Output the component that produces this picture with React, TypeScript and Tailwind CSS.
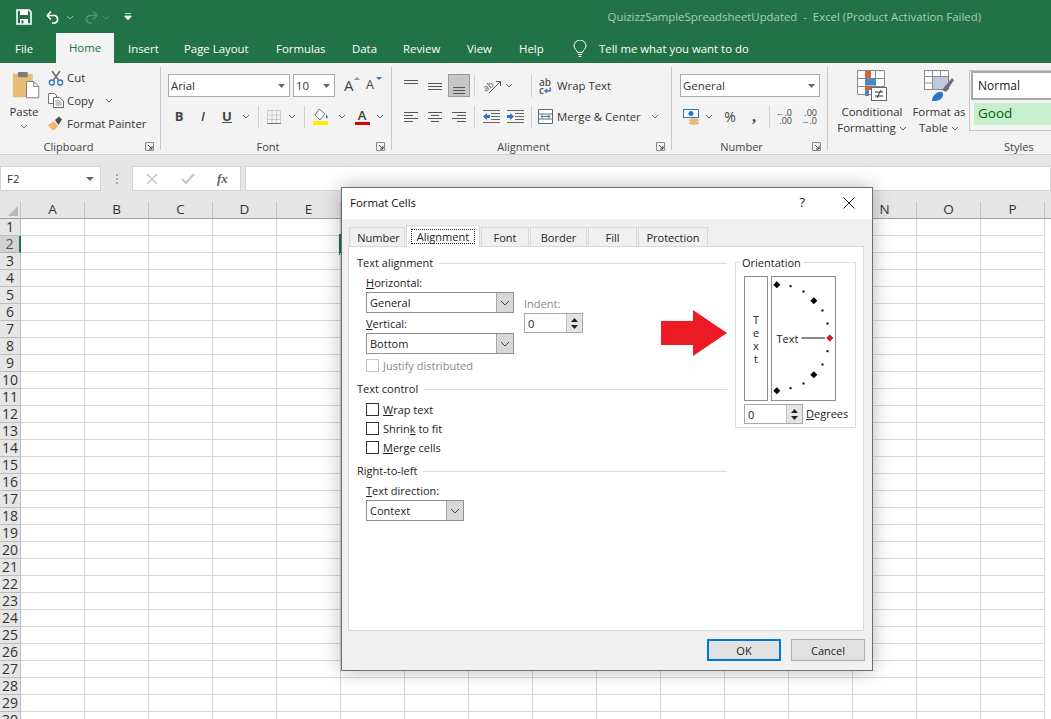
import React from 'react';

const GREEN = '#217346';

function Chev({ className = '', color = '#666' }: { className?: string; color?: string }) {
  return (
    <svg width="8" height="5" viewBox="0 0 8 5" className={`shrink-0 ${className}`}>
      <path d="M1 1l3 3 3-3" fill="none" stroke={color} strokeWidth="1" />
    </svg>
  );
}

function Launcher() {
  return (
    <svg width="9" height="9" viewBox="0 0 9 9" className="mt-[1px]">
      <path d="M.5 8.500v-8h8v8z" fill="none" stroke="#8a8a8a" />
      <path d="M3 3l4 4M7 4v3H4" fill="none" stroke="#444" />
    </svg>
  );
}

function Group({ className, label, labelClass = '', children }: { className: string; label: string; labelClass?: string; children: React.ReactNode }) {
  return (
    <div className={`relative flex flex-col shrink-0 ${className}`}>
      <div className="h-[77px]">{children}</div>
      <div className="flex items-center h-[16px] mt-[-1px]">
        <div className={`flex-1 text-center text-[11px] text-[#444] leading-none pr-[1px] ${labelClass}`}>{label}</div>
        <div className="w-[16px] shrink-0"><Launcher /></div>
      </div>
      <div className="absolute right-0 top-[4px] bottom-[4px] w-px bg-[#c8c8c8]" />
    </div>
  );
}

function Sep({ className = '' }: { className?: string }) {
  return <div className={`w-px h-[22px] bg-[#d0d0d0] shrink-0 ${className}`} />;
}

function Lines({ rows, x1, x2 }: { rows: number[]; x1: number[]; x2: number[] }) {
  return (
    <svg width="16" height="16" viewBox="0 0 16 16">
      {rows.map((y, i) => (
        <path key={y} d={`M${x1[i]} ${y + 0.5}H${x2[i]}`} stroke="#555" />
      ))}
    </svg>
  );
}

function AlignCell({ active, children }: { active?: boolean; children: React.ReactNode }) {
  return (
    <div className={`w-[22px] h-[23px] flex items-center justify-center shrink-0 ${active ? 'bg-[#c6c6c6] border border-[#9a9a9a]' : ''}`}>
      {children}
    </div>
  );
}

function PasteIcon() {
  return (
    <svg width="28" height="29" viewBox="0 0 30 32" className="ml-[3px]">
      <rect x="0.500" y="3" width="22" height="26" fill="#e8bd78" />
      <rect x="6" y="1" width="11" height="6" rx="1" fill="#7b7b7b" />
      <path d="M15.500 11.500h8l5.500 5.500v12.500h-13.500z" fill="#fff" stroke="#777" />
      <path d="M23.500 11.500v5.500h5.500" fill="none" stroke="#777" />
    </svg>
  );
}

function Scissors() {
  return (
    <svg width="16" height="16" viewBox="0 0 16 16">
      <path d="M4 1l6.500 9M12 1L5.500 10" stroke="#6d6d6d" strokeWidth="1.500" fill="none" />
      <circle cx="3.800" cy="12.500" r="2.500" fill="none" stroke="#2f74c0" strokeWidth="1.300" />
      <circle cx="12.200" cy="12.500" r="2.500" fill="none" stroke="#2f74c0" strokeWidth="1.300" />
    </svg>
  );
}

function CopyIcon() {
  return (
    <svg width="16" height="15" viewBox="0 0 16 15">
      <path d="M.5.500h6l2 2v8h-8z" fill="#fff" stroke="#777" />
      <path d="M5.500 4.500h6l4 3.500v6.500h-10z" fill="#fff" stroke="#666" />
      <path d="M7.500 8h5M7.500 10h6M7.500 12h6" stroke="#888" />
    </svg>
  );
}

function Brush() {
  return (
    <svg width="16" height="15" viewBox="0 0 16 15">
      <path d="M0 9l6-4 4 5-4 4.500C4 14 1.500 11 0 9z" fill="#eeb76c" />
      <path d="M7 4l4-3.500 3 3L10.500 9z" fill="#4d4d4d" />
    </svg>
  );
}

function Tab({ children, className = '' }: { children: React.ReactNode; className?: string }) {
  return <div className={`text-[11.4px] leading-none text-white shrink-0 whitespace-nowrap ${className}`}>{children}</div>;
}

function Select({ value, className }: { value: string; className: string }) {
  return (
    <div className={`flex items-center h-[21px] border border-[#8f8f8f] bg-white ${className}`}>
      <span className="flex-1 pl-[3px] text-[11px] text-[#222] leading-none">{value}</span>
      <span className="w-[17px] h-full bg-[#d8d8d8] border-l border-[#a8a8a8] flex items-center justify-center">
        <svg width="10" height="6" viewBox="0 0 10 6"><path d="M1 1l4 4 4-4" fill="none" stroke="#444" /></svg>
      </span>
    </div>
  );
}

function Spinner({ className }: { className: string }) {
  return (
    <div className={`flex items-center border border-[#a8a8a8] bg-white ${className}`}>
      <span className="flex-1 pl-[3px] text-[11px] text-[#222] leading-none">0</span>
      <span className="w-[16px] h-full bg-[#e4e4e4] border-l border-[#c0c0c0] flex flex-col items-center justify-center gap-[3px]">
        <svg width="7" height="4" viewBox="0 0 7 4"><path d="M3.500 0L7 4H0z" fill="#222" /></svg>
        <svg width="7" height="4" viewBox="0 0 7 4"><path d="M3.500 4L0 0h7z" fill="#222" /></svg>
      </span>
    </div>
  );
}

function Legend({ children, className = '' }: { children: React.ReactNode; className?: string }) {
  return (
    <div className={`flex items-center h-[16px] gap-[6px] ${className}`}>
      <span className="text-[11px] text-[#222] leading-none mt-[-2px]">{children}</span>
      <div className="flex-1 h-px bg-[#dcdcdc]" />
    </div>
  );
}

function Check({ children, className = '', disabled }: { children: React.ReactNode; className?: string; disabled?: boolean }) {
  return (
    <div className={`flex items-center h-[14px] ${className}`}>
      <div className={`w-[13px] h-[13px] mt-[-1px] border bg-white shrink-0 ${disabled ? 'border-[#c8c8c8]' : 'border-[#333]'}`} />
      <span className={`ml-[4px] mt-[-2px] text-[11px] leading-none ${disabled ? 'text-[#8a8a8a]' : 'text-[#222]'}`}>{children}</span>
    </div>
  );
}

function DTab({ children, className = '' }: { children: React.ReactNode; className?: string }) {
  return (
    <div className={`h-[19px] mt-[1px] flex items-center justify-center border border-b-0 border-[#d9d9d9] bg-[#f0f0f0] text-[11px] text-[#222] leading-none shrink-0 ml-[1px] ${className}`}>
      {children}
    </div>
  );
}

function Dial() {
  const big = [[5.8, 8.8], [42.8, 24.8], [42.8, 98.8], [5.8, 114.8]];
  const small = [[19.5, 10.2], [32.5, 15.5], [51.5, 34.5], [56.5, 47.5], [56.5, 75.2], [51.5, 88.5], [32.5, 107.5], [19.5, 112.2]];
  return (
    <div className="w-[65px] h-[125px] border border-[#8c8c8c] ml-[3px] shrink-0">
      <svg width="63" height="123" viewBox="1 1 63 123">
        {big.map(([x, y]) => (
          <path key={`${x}-${y}`} d={`M${x} ${y - 3.5}l3.500 3.500-3.500 3.500-3.500-3.500z`} fill="#000" />
        ))}
        {small.map(([x, y]) => (
          <rect key={`${x}-${y}`} x={x - 1} y={y - 1} width="2" height="2" fill="#000" />
        ))}
        <text x="5.500" y="67" fontSize="11" fill="#222">Text</text>
        <path d="M30.500 62H54" stroke="#111" />
        <path d="M58.800 58.800l3.200 3.200-3.200 3.200-3.200-3.200z" fill="#e01b24" stroke="#700" strokeWidth=".5" />
      </svg>
    </div>
  );
}

const columns = ['A', 'B', 'C', 'D', 'E', 'F', 'G', 'H', 'I', 'J', 'K', 'L', 'M', 'N', 'O', 'P'];
const rows = Array.from({ length: 30 }, (_, i) => i + 1);

function Sheet() {
  return (
    <div className="relative flex-1 overflow-hidden bg-white">
      <div className="flex h-[17px] bg-[#e6e6e6] border-b border-[#9f9f9f]">
        <div className="w-[21px] shrink-0 flex items-end justify-end pr-[2px] pb-[2px] border-r border-[#c4c4c4]">
          <svg width="10" height="10" viewBox="0 0 10 10"><path d="M10 0v10H0z" fill="#b8b8b8" /></svg>
        </div>
        {columns.map((c) => (
          <div key={c} className="w-[64px] shrink-0 border-r border-[#c4c4c4] flex items-center justify-center text-[13.5px] text-[#333] leading-none">
            {c}
          </div>
        ))}
      </div>
      {rows.map((r) => (
        <div key={r} className="flex h-[17px]">
          <div className={`w-[21px] shrink-0 border-b border-r flex items-center justify-center text-[14px] leading-none ${r === 2 ? 'bg-[#d2d2d2] border-r-2 border-r-[#217346] border-b-[#b4b4b4] text-[#3f5a4a]' : 'bg-[#e6e6e6] border-[#bdbdbd] text-[#333]'}`}>
            {r}
          </div>
          {columns.map((c) => (
            <div key={c} className={`w-[64px] shrink-0 border-b border-r border-[#d6d6d6] ${r === 2 && c === 'F' ? 'outline-2 outline-[#217346]' : ''}`} />
          ))}
        </div>
      ))}
    </div>
  );
}

function Dialog() {
  return (
    <div className="absolute left-[341px] top-[187px] w-[532px] h-[484px] border border-[#6f6f6f] bg-[#f0f0f0] flex flex-col shadow-[0_0_18px_rgba(0,0,0,0.28)]">
      <div className="h-[31px] shrink-0 bg-white flex items-center pl-[8px] pr-[17px]">
        <span className="flex-1 text-[11.4px] text-[#111] leading-none mt-[-2px]">Format Cells</span>
        <span className="text-[13px] text-[#222] leading-none mr-[38px] mt-[-2px]">?</span>
        <svg width="12" height="12" viewBox="0 0 12 12" className="mt-[-1px]"><path d="M.5.500l11 11M11.500.500l-11 11" stroke="#222" /></svg>
      </div>
      <div className="h-[20px] mt-[7px] ml-[6px] flex items-end relative z-10 shrink-0">
        <DTab className="w-[56px] ml-0 pl-[3px]">Number</DTab>
        <div className="w-[74px] h-[22px] ml-[1px] mb-[-1px] bg-white border border-b-0 border-[#d9d9d9] flex items-center justify-center shrink-0">
          <span className="w-[64px] h-[15px] border border-dotted border-[#222] flex items-center justify-center text-[11px] text-[#222] leading-none">Alignment</span>
        </div>
        <DTab className="w-[48px]">Font</DTab>
        <DTab className="w-[57px]">Border</DTab>
        <DTab className="w-[49px]">Fill</DTab>
        <DTab className="w-[70px]">Protection</DTab>
      </div>
      <div className="ml-[6px] mr-[8px] h-[385px] shrink-0 bg-white border border-[#d9d9d9] flex">
        <div className="w-[378px] pl-[8px] shrink-0">
          <Legend className="mt-[8px]">Text alignment</Legend>
          <div className="flex pl-[9px] mt-[4px]">
            <div className="w-[148px]">
              <div className="h-[16px] text-[11px] text-[#222] leading-[16px]"><u>H</u>orizontal:</div>
              <Select value="General" className="w-[148px] mt-[1px]" />
              <div className="h-[16px] mt-[3px] text-[11px] text-[#222] leading-[16px]"><u>V</u>ertical:</div>
              <Select value="Bottom" className="w-[148px] mt-[1px]" />
            </div>
            <div className="ml-[10px] pt-[21px]">
              <div className="h-[16px] text-[11px] text-[#8a8a8a] leading-[16px]">Indent:</div>
              <Spinner className="w-[59px] h-[20px] mt-[1px]" />
            </div>
          </div>
          <Check className="ml-[9px] mt-[5px]" disabled>Justify distributed</Check>
          <Legend className="mt-[8px]">Text control</Legend>
          <Check className="ml-[9px] mt-[6px]"><u>W</u>rap text</Check>
          <Check className="ml-[9px] mt-[5px]">Shrin<u>k</u> to fit</Check>
          <Check className="ml-[9px] mt-[5px]"><u>M</u>erge cells</Check>
          <Legend className="mt-[8px]">Right-to-left</Legend>
          <div className="h-[16px] ml-[9px] mt-[4px] text-[11px] text-[#222] leading-[16px]"><u>T</u>ext direction:</div>
          <Select value="Context" className="w-[98px] ml-[9px] mt-[1px]" />
        </div>
        <div className="w-[121px] h-[166px] mt-[15px] ml-[8px] border border-[#dcdcdc] relative pt-[13px] pl-[8px] shrink-0">
          <span className="absolute -top-[8px] left-[4px] bg-white px-[2px] text-[11px] text-[#222] leading-[15px]">Orientation</span>
          <div className="flex">
            <div className="w-[24px] h-[125px] border border-[#8c8c8c] flex flex-col items-center justify-center text-[11px] leading-[13px] text-[#222] shrink-0">
              <span>T</span><span>e</span><span>x</span><span>t</span>
            </div>
            <Dial />
          </div>
          <div className="flex items-center mt-[3px]">
            <Spinner className="w-[59px] h-[20px]" />
            <span className="ml-[3px] mt-[-2px] text-[11px] text-[#222] leading-none"><u>D</u>egrees</span>
          </div>
        </div>
      </div>
      <div className="flex justify-end pr-[7px] mt-[8px] gap-[10px]">
        <div className="w-[74px] h-[22px] border-2 border-[#0078d7] bg-[#e1e1e1] flex items-center justify-center text-[11px] text-[#222] leading-none">OK</div>
        <div className="w-[74px] h-[22px] border border-[#adadad] bg-[#e1e1e1] flex items-center justify-center text-[11px] text-[#222] leading-none">Cancel</div>
      </div>
    </div>
  );
}

function Ribbon() {
  return (
    <div className="h-[92px] shrink-0 bg-[#f3f3f3] border-b border-[#cfcfcf] flex overflow-hidden">
      <Group className="w-[161px]" label="Clipboard" labelClass="pr-[8px]">
        <div className="flex">
          <div className="w-[48px] shrink-0 flex flex-col items-center pt-[8px]">
            <PasteIcon />
            <span className="text-[11.4px] text-[#333] leading-none mt-[6px]">Paste</span>
            <Chev className="mt-[7px]" />
          </div>
          <div className="flex flex-col text-[11.4px] text-[#333] leading-none pt-[3px]">
            <div className="flex items-center h-[23px]"><Scissors /><span className="ml-[3px]">Cut</span></div>
            <div className="flex items-center h-[23px]"><CopyIcon /><span className="ml-[3px]">Copy</span><Chev className="ml-[11px]" /></div>
            <div className="flex items-center h-[23px]"><Brush /><span className="ml-[3px]">Format Painter</span></div>
          </div>
        </div>
      </Group>
      <Group className="w-[231px]" label="Font">
        <div className="flex items-center h-[23px] mt-[11px] pl-[7px]">
          <div className="w-[122px] h-[23px] border border-[#ababab] bg-white flex items-center pl-[2px] pr-[4px] shrink-0">
            <span className="flex-1 text-[11.4px] text-[#333] leading-none">Arial</span>
            <svg width="7" height="4" viewBox="0 0 7 4"><path d="M0 0h7L3.500 4z" fill="#666" /></svg>
          </div>
          <div className="w-[42px] h-[23px] ml-[3px] border border-[#ababab] bg-white flex items-center pl-[2px] pr-[4px] shrink-0">
            <span className="flex-1 text-[11.4px] text-[#333] leading-none">10</span>
            <svg width="7" height="4" viewBox="0 0 7 4"><path d="M0 0h7L3.500 4z" fill="#666" /></svg>
          </div>
          <div className="w-[16px] ml-[9px] text-[15px] text-[#444] leading-none relative shrink-0">A<span className="absolute top-[-1px] right-0 border-x-[3px] border-b-[3px] border-x-transparent border-b-[#8c98a8]" /></div>
          <div className="w-[16px] ml-[6px] text-[12.5px] text-[#444] leading-none relative shrink-0">A<span className="absolute top-[-2px] right-0 border-x-[3px] border-t-[3px] border-x-transparent border-t-[#2f74c0]" /></div>
        </div>
        <div className="flex items-center h-[23px] mt-[8px]">
          <span className="w-[16px] ml-[10px] text-center text-[13px] font-bold text-[#444] leading-none">B</span>
          <span className="w-[16px] ml-[8px] text-center text-[13px] italic font-semibold text-[#444] leading-none">I</span>
          <span className="w-[16px] ml-[8px] text-center text-[13px] font-bold underline text-[#444] leading-none">U</span>
          <Chev className="ml-[7px]" />
          <Sep className="ml-[8px]" />
          <svg width="14" height="14" viewBox="0 0 14 14" className="ml-[8px]">
            <path d="M.5.500h13v13H.500zM.5 5h13M.5 9.500h13M5 .500v13M9.500 .500v13" fill="none" stroke="#a8a8a8" strokeDasharray="1 1" />
            <path d="M0 13.500h14" stroke="#777" />
          </svg>
          <Chev className="ml-[7px]" />
          <Sep className="ml-[8px]" />
          <svg width="16" height="17" viewBox="0 0 16 17" className="ml-[8px]">
            <path d="M6 1l6 5-5 6-5-5z" fill="#fff" stroke="#777" />
            <path d="M13 6l2 3-2 2z" fill="#2f74c0" />
            <rect x="0" y="13" width="15" height="4" fill="#ffeb00" />
          </svg>
          <Chev className="ml-[9px]" />
          <div className="w-[16px] ml-[8px] flex flex-col items-center shrink-0">
            <span className="text-[13px] font-semibold text-[#444] leading-[13px]">A</span>
            <span className="w-[15px] h-[3px] bg-[#e00000]" />
          </div>
          <Chev className="ml-[6px]" />
        </div>
      </Group>
      <Group className="w-[280px]" label="Alignment">
        <div className="flex items-center h-[23px] mt-[11px] pl-[8px] gap-[2px]">
          <AlignCell><Lines rows={[2, 5]} x1={[1, 1]} x2={[15, 15]} /></AlignCell>
          <AlignCell><Lines rows={[5, 8, 11]} x1={[1, 1, 1]} x2={[15, 15, 15]} /></AlignCell>
          <AlignCell active><Lines rows={[9, 12, 15]} x1={[2, 2, 2]} x2={[14, 14, 14]} /></AlignCell>
          <Sep className="ml-[2px]" />
          <svg width="18" height="16" viewBox="0 0 18 16" className="ml-[6px]">
            <text x="0" y="11" fontSize="9" fill="#555" transform="rotate(-35 6 8)">ab</text>
            <path d="M6 15L17 4M13 3.500h4.500V8" fill="none" stroke="#555" />
          </svg>
          <Chev className="ml-[2px]" />
          <Sep className="ml-[16px]" />
          <div className="ml-[5px] w-[14px] text-[10px] text-[#555] leading-[8px] font-semibold shrink-0">ab<br />c<span className="text-[#2f74c0]">↵</span></div>
          <span className="ml-[2px] text-[11.4px] text-[#333] leading-none whitespace-nowrap">Wrap Text</span>
        </div>
        <div className="flex items-center h-[23px] mt-[8px] pl-[8px] gap-[2px]">
          <AlignCell><Lines rows={[3, 6, 9, 12]} x1={[1, 1, 1, 1]} x2={[15, 10, 15, 10]} /></AlignCell>
          <AlignCell><Lines rows={[3, 6, 9, 12]} x1={[1, 4, 1, 4]} x2={[15, 12, 15, 12]} /></AlignCell>
          <AlignCell><Lines rows={[3, 6, 9, 12]} x1={[1, 6, 1, 6]} x2={[15, 15, 15, 15]} /></AlignCell>
          <Sep className="ml-[2px]" />
          <svg width="17" height="13" viewBox="0 0 17 13" className="ml-[6px]">
            <path d="M0 .5h17M8 3.500h9M8 6.500h9M8 9.500h9M0 12.500h17" stroke="#666" />
            <path d="M0 6.500L4 3v2h3v3H4v2z" fill="#2f74c0" />
          </svg>
          <svg width="17" height="13" viewBox="0 0 17 13" className="ml-[5px]">
            <path d="M0 .5h17M8 3.500h9M8 6.500h9M8 9.500h9M0 12.500h17" stroke="#666" />
            <path d="M7 6.500L3 3v2H0v3h3v2z" fill="#2f74c0" />
          </svg>
          <Sep className="ml-[5px]" />
          <svg width="15" height="15" viewBox="0 0 15 15" className="ml-[4px]">
            <path d="M.5.500h14v14H.500zM.5 5h14M.5 10h14" fill="#fff" stroke="#666" />
            <path d="M3 7.500h9M3 7.500l2-2M3 7.500l2 2M12 7.500l-2-2M12 7.500l-2 2" stroke="#2f74c0" fill="none" />
          </svg>
          <span className="ml-[2px] text-[11.4px] text-[#333] leading-none whitespace-nowrap">Merge &amp; Center</span>
          <Chev className="ml-[8px]" />
        </div>
      </Group>
      <Group className="w-[156px]" label="Number">
        <div className="h-[23px] w-[140px] mt-[11px] ml-[8px] border border-[#ababab] bg-white flex items-center pl-[2px] pr-[4px]">
          <span className="flex-1 text-[11.4px] text-[#333] leading-none">General</span>
          <svg width="7" height="4" viewBox="0 0 7 4"><path d="M0 0h7L3.500 4z" fill="#666" /></svg>
        </div>
        <div className="flex items-center h-[23px] mt-[8px]">
          <svg width="17" height="17" viewBox="0 0 17 17" className="ml-[11px]">
            <rect x="0.500" y="1.500" width="15" height="8" fill="#fff" stroke="#2f74c0" />
            <circle cx="8" cy="5.500" r="2.500" fill="#2f74c0" />
            <ellipse cx="11" cy="12" rx="5" ry="1.800" fill="#e8b56c" />
            <ellipse cx="11" cy="15" rx="5" ry="1.800" fill="#e8b56c" />
          </svg>
          <Chev className="ml-[5px]" />
          <span className="w-[16px] ml-[9px] text-center text-[14px] text-[#444] leading-none shrink-0">%</span>
          <span className="w-[10px] ml-[11px] text-center text-[16px] font-bold font-['Liberation_Serif',serif] text-[#444] leading-none shrink-0">,</span>
          <Sep className="ml-[10px]" />
          <div className="w-[18px] ml-[4px] text-[9px] leading-[8px] text-[#444] text-right shrink-0"><span className="text-[#2f74c0]">←</span>.0<br />.00</div>
          <div className="w-[18px] ml-[7px] text-[9px] leading-[8px] text-[#444] text-right shrink-0">.00<br /><span className="text-[#2f74c0]">→</span>.0</div>
        </div>
      </Group>
      <div className="flex flex-col flex-1">
        <div className="flex h-[76px]">
          <div className="w-[90px] ml-[-1px] flex flex-col items-center pt-[7px] shrink-0">
            <svg width="30" height="31" viewBox="0 0 30 31">
              <path d="M.5.500h27v24H.500zM.5 8.500h27M.5 16.500h27M9.500.500v24M18.500.500v24" fill="#fff" stroke="#8a8a8a" />
              <rect x="8" y="1" width="6" height="7" fill="#d9603b" />
              <rect x="8" y="8.500" width="11" height="7" fill="#4a86c8" />
              <rect x="8" y="16" width="8" height="4" fill="#d9603b" />
              <rect x="8" y="20" width="4" height="6" fill="#4a86c8" />
              <rect x="14.500" y="17.500" width="15" height="13" fill="#fff" stroke="#666" />
              <path d="M18 22h8M18 26h8M24 20l-4 8" stroke="#333" fill="none" />
            </svg>
            <span className="text-[11.4px] text-[#333] leading-[16px] mt-[3px]">Conditional</span>
            <span className="flex items-center text-[11.4px] text-[#333] leading-[16px]">Formatting<Chev className="ml-[3px]" /></span>
          </div>
          <div className="w-[54px] ml-[-5px] flex flex-col items-center pt-[7px] shrink-0">
            <svg width="30" height="31" viewBox="0 0 30 31">
              <path d="M.5.500h24v19H.500zM.5 6.500h24M.5 13h24M8.500 .500v19M16.500 .500v19" fill="#fff" stroke="#8a8a8a" />
              <rect x="9" y="7" width="15" height="12" fill="#bccbe0" />
              <path d="M18 20l10-12 2 2-8 12z" fill="#6e6e6e" />
              <path d="M8 31c0-5 5-10 10-9 2 2 1 5-1 7-3 2-6 2-9 2z" fill="#2f74c0" />
            </svg>
            <span className="text-[11.4px] text-[#333] leading-[16px] mt-[3px] whitespace-nowrap">Format as</span>
            <span className="flex items-center text-[11.4px] text-[#333] leading-[16px]">Table<Chev className="ml-[3px]" /></span>
          </div>
          <div className="w-[124px] h-[61px] ml-[3px] mt-[7px] border border-[#c6c6c6] border-r-0 shrink-0">
            <div className="h-[29px] ml-[1px] border-2 border-[#a8a8a8] bg-white flex items-center pl-[5px] text-[12px] text-[#222] leading-none">Normal</div>
            <div className="h-[22px] mt-[3px] ml-[4px] bg-[#c6efce] flex items-center pl-[4px] text-[13.5px] text-[#006100] leading-none">Good</div>
          </div>
        </div>
        <div className="h-[16px] flex items-center mt-[-1px]">
          <span className="ml-[176px] text-[11px] text-[#444] leading-none">Styles</span>
        </div>
      </div>
    </div>
  );
}

export default function App() {
  return (
    <div className="relative w-[1051px] h-[719px] overflow-hidden flex flex-col bg-white font-['Open_Sans','Noto_Sans',sans-serif]">
      <div className="h-[34px] shrink-0 flex items-center pl-[16px] pr-[70px]" style={{ backgroundColor: GREEN }}>
        <svg width="16" height="16" viewBox="0 0 16 16">
          <path d="M1 1h12l2 2v12H1z" fill="none" stroke="#fff" strokeWidth="1.600" />
          <path d="M4 1h8v5H4zM4 10h8v5H4z" fill="#fff" />
          <path d="M5.500 11.500h2v3h-2z" fill="#217346" />
        </svg>
        <svg width="15" height="14" viewBox="0 0 15 14" className="ml-[14px]">
          <path d="M1 5.500h8a4 4 0 0 1 0 7.500H6M1 5.500l4-4M1 5.500l4 4" fill="none" stroke="#fff" strokeWidth="1.600" />
        </svg>
        <Chev className="ml-[5px]" color="#8fbca3" />
        <svg width="15" height="14" viewBox="0 0 15 14" className="ml-[9px]">
          <path d="M14 5.500H6a4 4 0 0 0 0 7.500h3M14 5.500l-4-4M14 5.500l-4 4" fill="none" stroke="#4f9470" strokeWidth="1.600" />
        </svg>
        <Chev className="ml-[4px]" color="#4f9470" />
        <svg width="8" height="8" viewBox="0 0 8 8" className="ml-[14px]">
          <path d="M1 .5h6M.5 3h7L4 7z" fill="#fff" stroke="#fff" strokeWidth=".7" />
        </svg>
        <span className="ml-auto text-[11.4px] text-[#a9cdb9] leading-none whitespace-pre">QuizizzSampleSpreadsheetUpdated  -  Excel (Product Activation Failed)</span>
      </div>
      <div className="h-[29px] shrink-0 flex items-center pl-[15px]" style={{ backgroundColor: GREEN }}>
        <Tab className="w-[19px]">File</Tab>
        <div className="w-[58px] h-[30px] mt-[-1px] ml-[22px] bg-[#f3f3f3] flex items-center justify-center text-[11.4px] leading-none text-[#217346] shrink-0">Home</div>
        <Tab className="ml-[14px] w-[29px]">Insert</Tab>
        <Tab className="ml-[27px] w-[65px]">Page Layout</Tab>
        <Tab className="ml-[27px] w-[49px]">Formulas</Tab>
        <Tab className="ml-[27px] w-[24px]">Data</Tab>
        <Tab className="ml-[27px] w-[37px]">Review</Tab>
        <Tab className="ml-[27px] w-[25px]">View</Tab>
        <Tab className="ml-[27px] w-[25px]">Help</Tab>
        <svg width="14" height="18" viewBox="0 0 14 18" className="ml-[29px]">
          <path d="M4.500 12.500C4 10 1 9 1 6a6 6 0 0 1 12 0c0 3-3 4-3.500 6.500z" fill="none" stroke="#fff" />
          <path d="M5 14.500h4M5.500 16.500h3" stroke="#fff" />
        </svg>
        <Tab className="ml-[12px]">Tell me what you want to do</Tab>
      </div>
      <Ribbon />
      <div className="h-[47px] shrink-0 bg-[#e6e6e6] flex items-start pt-[11px]">
        <div className="w-[101px] h-[25px] bg-white border border-[#d4d4d4] flex items-center pl-[6px] pr-[6px] shrink-0">
          <span className="flex-1 text-[11.4px] text-[#333] leading-none">F2</span>
          <svg width="8" height="4" viewBox="0 0 8 4"><path d="M0 0h8L4 4z" fill="#666" /></svg>
        </div>
        <div className="w-[31px] h-[25px] flex items-center justify-center shrink-0">
          <svg width="2" height="10" viewBox="0 0 2 10"><path d="M1 0v2M1 4v2M1 8v2" stroke="#aaa" strokeWidth="2" /></svg>
        </div>
        <div className="w-[109px] h-[25px] bg-white border border-[#d4d4d4] flex items-center shrink-0">
          <svg width="12" height="12" viewBox="0 0 12 12" className="ml-[13px]"><path d="M1 1l10 10M11 1L1 11" stroke="#c4c4c4" strokeWidth="1.600" /></svg>
          <svg width="14" height="12" viewBox="0 0 14 12" className="ml-[23px]"><path d="M1 6l4 4 8-9" fill="none" stroke="#c4c4c4" strokeWidth="2" /></svg>
          <span className="ml-[22px] font-['Liberation_Serif',serif] italic font-bold text-[13px] text-[#666] leading-none">fx</span>
        </div>
        <div className="flex-1 h-[25px] ml-[4px] bg-white border border-[#d4d4d4]" />
      </div>
      <Sheet />
      <Dialog />
      <svg width="67" height="47" viewBox="0 0 67 47" className="absolute left-[661px] top-[310px]">
        <path d="M0 11h32V0l34 23-34 23V35H0z" fill="#ed1c24" />
      </svg>
    </div>
  );
}
